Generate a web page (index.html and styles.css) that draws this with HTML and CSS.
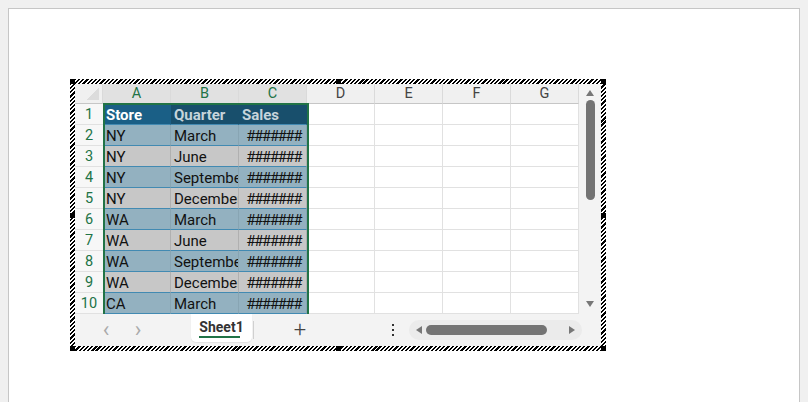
FILE: index.html
```html
<!DOCTYPE html>
<html lang="en">
    <head>
        <meta charset="UTF-8">
        <meta name="viewport" content="width=device-width, initial-scale=1.0">
        <title>Book1 - Sheet1</title>
        <link rel="stylesheet" href="styles.css">
    </head>

    <body>
        <div class="page">
            <div class="frame">
                <div class="inner">

                    <div class="grid">
                        <div class="corner"></div>
                        <div class="col-head sel">A</div>
                        <div class="col-head sel">B</div>
                        <div class="col-head sel">C</div>
                        <div class="col-head">D</div>
                        <div class="col-head">E</div>
                        <div class="col-head">F</div>
                        <div class="col-head">G</div>

                        <div class="row-head">1</div>
                        <div class="cell th active">Store</div>
                        <div class="cell th">Quarter</div>
                        <div class="cell th">Sales</div>
                        <div class="cell"></div><div class="cell"></div><div class="cell"></div><div class="cell"></div>

                        <div class="row-head">2</div>
                        <div class="cell band">NY</div>
                        <div class="cell band">March</div>
                        <div class="cell band num">#######</div>
                        <div class="cell"></div><div class="cell"></div><div class="cell"></div><div class="cell"></div>

                        <div class="row-head">3</div>
                        <div class="cell plain">NY</div>
                        <div class="cell plain">June</div>
                        <div class="cell plain num">#######</div>
                        <div class="cell"></div><div class="cell"></div><div class="cell"></div><div class="cell"></div>

                        <div class="row-head">4</div>
                        <div class="cell band">NY</div>
                        <div class="cell band">September</div>
                        <div class="cell band num">#######</div>
                        <div class="cell"></div><div class="cell"></div><div class="cell"></div><div class="cell"></div>

                        <div class="row-head">5</div>
                        <div class="cell plain">NY</div>
                        <div class="cell plain">December</div>
                        <div class="cell plain num">#######</div>
                        <div class="cell"></div><div class="cell"></div><div class="cell"></div><div class="cell"></div>

                        <div class="row-head">6</div>
                        <div class="cell band">WA</div>
                        <div class="cell band">March</div>
                        <div class="cell band num">#######</div>
                        <div class="cell"></div><div class="cell"></div><div class="cell"></div><div class="cell"></div>

                        <div class="row-head">7</div>
                        <div class="cell plain">WA</div>
                        <div class="cell plain">June</div>
                        <div class="cell plain num">#######</div>
                        <div class="cell"></div><div class="cell"></div><div class="cell"></div><div class="cell"></div>

                        <div class="row-head">8</div>
                        <div class="cell band">WA</div>
                        <div class="cell band">September</div>
                        <div class="cell band num">#######</div>
                        <div class="cell"></div><div class="cell"></div><div class="cell"></div><div class="cell"></div>

                        <div class="row-head">9</div>
                        <div class="cell plain">WA</div>
                        <div class="cell plain">December</div>
                        <div class="cell plain num">#######</div>
                        <div class="cell"></div><div class="cell"></div><div class="cell"></div><div class="cell"></div>

                        <div class="row-head">10</div>
                        <div class="cell band">CA</div>
                        <div class="cell band">March</div>
                        <div class="cell band num">#######</div>
                        <div class="cell"></div><div class="cell"></div><div class="cell"></div><div class="cell"></div>

                        <!-- selected range A1:C10 -->
                        <div class="selection"></div>
                    </div>

                    <div class="vscroll">
                        <svg class="arrow" width="10" height="8" viewBox="0 0 10 8"><polygon points="5,1 9,7 1,7" fill="#777"/></svg>
                        <div class="vthumb"></div>
                        <svg class="arrow down" width="10" height="8" viewBox="0 0 10 8"><polygon points="1,1 9,1 5,7" fill="#777"/></svg>
                    </div>

                    <div class="tabbar">
                        <span class="nav">&#x2039;</span>
                        <span class="nav">&#x203A;</span>
                        <div class="tab">Sheet1</div>
                        <span class="divider"></span>
                        <span class="plus">+</span>
                        <span class="dots">
                            <svg width="4" height="14" viewBox="0 0 4 14"><rect x="1" y="1" width="2" height="2" fill="#333"/><rect x="1" y="6" width="2" height="2" fill="#333"/><rect x="1" y="11" width="2" height="2" fill="#333"/></svg>
                        </span>
                        <div class="hscroll">
                            <svg width="8" height="10" viewBox="0 0 8 10"><polygon points="1,5 7,1 7,9" fill="#777"/></svg>
                            <div class="hthumb"></div>
                            <svg width="8" height="10" viewBox="0 0 8 10"><polygon points="1,1 7,5 1,9" fill="#777"/></svg>
                        </div>
                    </div>

                </div>

                <span class="handle tl"></span>
                <span class="handle tm"></span>
                <span class="handle tr"></span>
                <span class="handle ml"></span>
                <span class="handle mr"></span>
                <span class="handle bl"></span>
                <span class="handle bm"></span>
                <span class="handle br"></span>
            </div>
        </div>
    </body>
</html>
```

FILE: styles.css
```css
:root {
    --xl-green: rgb(33, 115, 70);
    --grid-line: rgb(225, 225, 225);
    --head-bg: rgb(240, 240, 240);
    --band-blue: rgb(147, 177, 192);
    --band-gray: rgb(199, 199, 199);
    --row-rule: rgb(66, 138, 178);
    --bar-bg: rgb(243, 243, 243);
    --thumb: rgb(115, 115, 115);
}

html, body {
    margin: 0;
    height: 100%;
}

body {
    background-color: #f0f0f0;
    padding: 8px 8px 0 8px;
    box-sizing: border-box;
    font-family: Roboto, "Noto Sans", sans-serif;
    overflow: hidden;
}

.page {
    background-color: #fff;
    border: 1px solid #c6c6c6;
    border-bottom: none;
    height: 100%;
    box-sizing: border-box;
    padding: 70px 0 0 61px;
}

/* object frame with the striped edge */
.frame {
    position: relative;
    width: 536px;
    height: 272px;
    box-sizing: border-box;
    padding: 5px;
    background: repeating-linear-gradient(135deg, #000 0 1.6px, #fff 1.6px 3px);
}

.inner {
    width: 526px;
    height: 262px;
    background-color: #fff;
    display: grid;
    grid-template-columns: 504px 22px;
    grid-template-rows: 230px 32px;
}

.handle {
    position: absolute;
    width: 5px;
    height: 5px;
    background-color: #000;
}

.tl { left: 0; top: 0; }
.tm { left: calc(50% - 2px); top: 0; }
.tr { right: 0; top: 0; }
.ml { left: 0; top: calc(50% - 2px); }
.mr { right: 0; top: calc(50% - 2px); }
.bl { left: 0; bottom: 0; }
.bm { left: calc(50% - 2px); bottom: 0; }
.br { right: 0; bottom: 0; }

/* sheet grid */
.grid {
    position: relative;
    display: grid;
    grid-template-columns: 28px repeat(7, 68px);
    grid-template-rows: 20px repeat(10, 21px);
    overflow: hidden;
}

.corner {
    background-color: var(--head-bg);
    border-bottom: 1px solid #c6c6c6;
    border-right: 1px solid #dadada;
    position: relative;
}

.corner::after {
    content: "";
    position: absolute;
    right: 3px;
    bottom: 3px;
    width: 12px;
    height: 12px;
    background: linear-gradient(to bottom right, transparent 50%, #dcdcdc 50%);
}

.col-head {
    background-color: var(--head-bg);
    border-right: 1px solid #dadada;
    border-bottom: 1px solid #c6c6c6;
    color: #444;
    font-size: 14.5px;
    text-align: center;
    line-height: 20px;
}

.col-head.sel {
    background-color: #e1e1e1;
    color: var(--xl-green);
    border-bottom-color: #bdbdbd;
}

.row-head {
    background-color: #f7f7f7;
    border-bottom: 1px solid var(--grid-line);
    color: var(--xl-green);
    font-size: 14.5px;
    text-align: center;
    line-height: 22px;
}

.cell {
    border-right: 1px solid var(--grid-line);
    border-bottom: 1px solid var(--grid-line);
    box-sizing: border-box;
    font-size: 15px;
    line-height: 19px;
    padding-top: 2px;
    padding-left: 3px;
    white-space: nowrap;
    overflow: hidden;
    color: #111;
}

.cell.th {
    background-color: #184f6c;
    color: #c6d4db;
    font-weight: 700;
    border-right-color: #184f6c;
    border-bottom-color: var(--row-rule);
}

.cell.th.active {
    background-color: #1a5f86;
    color: #fff;
    border-right-color: #1a5f86;
}

.cell.band {
    background-color: var(--band-blue);
    border-right-color: #88a5b3;
    border-bottom-color: var(--row-rule);
}

.cell.plain {
    background-color: var(--band-gray);
    border-right-color: #b0b0b0;
    border-bottom-color: var(--row-rule);
}

.cell.num {
    text-align: right;
    padding-right: 5px;
    padding-left: 0;
    letter-spacing: -1.4px;
}

.selection {
    position: absolute;
    left: 28px;
    top: 19px;
    width: 206px;
    height: 220px;
    border: 2px solid var(--xl-green);
    box-sizing: border-box;
    pointer-events: none;
}

/* vertical scroll bar */
.vscroll {
    background-color: var(--bar-bg);
    display: flex;
    flex-direction: column;
    align-items: center;
    padding-top: 5px;
}

.vthumb {
    width: 9px;
    height: 100px;
    margin-top: 3px;
    border-radius: 5px;
    background-color: var(--thumb);
}

.arrow.down {
    margin-top: auto;
    margin-bottom: 6px;
}

/* sheet tabs and horizontal scroll bar */
.tabbar {
    grid-column: 1 / 3;
    background-color: var(--bar-bg);
    display: flex;
    align-items: center;
    padding-left: 15px;
}

.nav {
    width: 32px;
    text-align: center;
    color: #aaa;
    font-size: 22px;
    line-height: 32px;
}

.tab {
    margin-left: 37px;
    width: 61px;
    height: 28px;
    align-self: flex-start;
    background-color: #fff;
    border-radius: 0 0 5px 5px;
    box-shadow: 0 1px 1px rgba(0, 0, 0, 0.08);
    font-size: 14px;
    font-weight: 700;
    color: #333;
    text-align: center;
    line-height: 26px;
    position: relative;
}

.tab::after {
    content: "";
    position: absolute;
    left: 8px;
    right: 12px;
    bottom: 4px;
    height: 2px;
    background-color: var(--xl-green);
}

.divider {
    width: 1px;
    height: 18px;
    background-color: #d0d0d0;
    margin-left: 1px;
}

.plus {
    margin-left: 30px;
    width: 32px;
    text-align: center;
    color: #444;
    font-size: 22px;
    font-weight: 300;
    line-height: 32px;
}

.dots {
    margin-left: 69px;
    width: 16px;
    display: flex;
    justify-content: center;
}

.hscroll {
    margin-left: 8px;
    width: 173px;
    height: 20px;
    border-radius: 10px;
    background-color: #ebebeb;
    display: flex;
    align-items: center;
    padding: 0 6px;
    box-sizing: border-box;
}

.hthumb {
    width: 121px;
    height: 10px;
    margin-left: 3px;
    margin-right: auto;
    border-radius: 5px;
    background-color: var(--thumb);
}
```
